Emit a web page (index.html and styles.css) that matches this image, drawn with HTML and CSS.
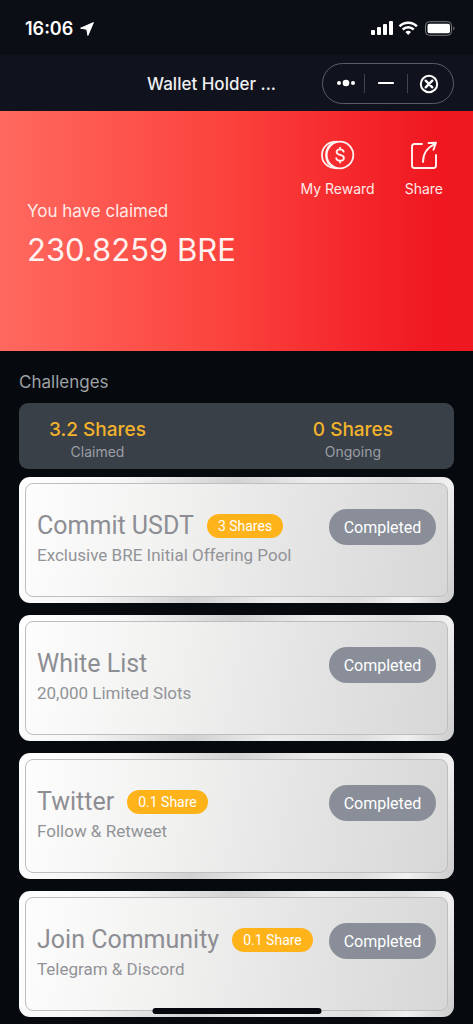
FILE: index.html
```html
<!DOCTYPE html>
<html lang="en">
<head>
<meta charset="utf-8">
<meta name="viewport" content="width=device-width, initial-scale=1">
<title>Wallet Holder</title>
<link rel="stylesheet" href="styles.css">
</head>
<body>
<div class="status">
  <span class="clock">16:06</span>
  <svg class="location" width="14" height="14" viewBox="0 0 14 14"><path d="M13.4.6.6 6.2 6.8 7.3 7.9 13.4Z" fill="#fff" stroke="#fff" stroke-linejoin="round"/></svg>
  <svg class="signals" width="86" height="16" viewBox="0 0 86 16" fill="#fff">
    <rect x="0" y="9" width="4" height="5" rx="1"/><rect x="6" y="6" width="4" height="8" rx="1"/><rect x="12" y="3" width="4" height="11" rx="1"/><rect x="18" y="0" width="4" height="14" rx="1"/>
    <g fill="none" stroke="#fff" stroke-width="2.5"><path d="M28.500 5.300a12.300 12.300 0 0 1 17.400 0M31.700 8.500a7.800 7.800 0 0 1 11 0"/></g>
    <path d="M34.400 11a4.100 4.100 0 0 1 5.600 0L37.200 14Z"/>
    <rect x="54.500" y=".7" width="26" height="13.600" rx="4" fill="none" stroke="#777a7f"/><rect x="56.500" y="2.700" width="22.500" height="9.600" rx="2"/><path d="M82.300 5.300q2.400 2.200 0 4.400Z" fill="#777a7f"/>
  </svg>
</div>
<header class="nav">
  <h1 class="nav-title">Wallet Holder ...</h1>
  <div class="capsule">
    <button class="capsule-button" aria-label="More"><svg width="20" height="8" viewBox="0 0 20 8" fill="#fff"><circle cx="3" cy="4" r="2"/><circle cx="10" cy="4" r="3.300"/><circle cx="17" cy="4" r="2"/></svg></button>
    <button class="capsule-button" aria-label="Minimize"><svg width="16" height="4" viewBox="0 0 16 4"><path d="M1 2h14" stroke="#fff" stroke-width="2.200" stroke-linecap="round"/></svg></button>
    <button class="capsule-button" aria-label="Close"><svg width="20" height="20" viewBox="0 0 20 20" fill="none" stroke="#fff" stroke-width="2"><circle cx="10" cy="10" r="8.200"/><path d="m6.700 6.700 6.600 6.600m0-6.600-6.600 6.600" stroke-width="2.400" stroke-linecap="round"/></svg></button>
  </div>
</header>
<section class="hero">
  <nav class="actions">
    <a class="action" href="#reward">
      <svg width="34" height="30" viewBox="0 0 34 30" fill="none" stroke="#fff3f1" stroke-width="1.800" stroke-linecap="round"><circle cx="19" cy="15" r="13.300"/><path d="M15.500 1.700C6.500 1.700 1 7.500 1 15s5.500 13.300 14.500 13.300M12 3.200C7.300 5.500 5 9.500 5 15s2.300 9.500 7 11.800"/><path d="M22.700 11.700c-.4-1.600-1.700-2.400-3.600-2.400-2 0-3.500 1-3.500 2.700 0 3.900 7.300 2 7.300 5.900 0 1.800-1.500 2.800-3.800 2.800-2.100 0-3.600-.8-3.900-2.600M19.100 7.600v1.700m0 11.400v1.800"/></svg>
      <span>My Reward</span>
    </a>
    <a class="action" href="#share">
      <svg width="26" height="30" viewBox="0 0 26 30" fill="none" stroke="#fff3f1" stroke-width="1.900" stroke-linecap="round" stroke-linejoin="round"><path d="M11 4H3.500Q1 4 1 6.500v19Q1 28 3.500 28h19q2.500 0 2.500-2.500V15M12 22C12 14 16.500 7.500 24 4M17.500 3l7.500-.3-2.500 7.100M24.800 3l-4.500 3.300"/></svg>
      <span>Share</span>
    </a>
  </nav>
  <p class="hero-label">You have claimed</p>
  <p class="hero-amount">230.8259 BRE</p>
</section>
<main class="challenges">
  <h2 class="heading">Challenges</h2>
  <div class="summary">
    <div class="stat"><strong class="stat-value">3.2 Shares</strong><span class="stat-label">Claimed</span></div>
    <div class="stat"><strong class="stat-value">0 Shares</strong><span class="stat-label">Ongoing</span></div>
  </div>
  <ul class="cards">
    <li class="card"><div class="card-inner"><div class="card-text"><div class="card-line"><h3 class="card-title">Commit USDT</h3><span class="badge">3 Shares</span></div><p class="card-note">Exclusive BRE Initial Offering Pool</p></div><button class="done">Completed</button></div></li>
    <li class="card"><div class="card-inner"><div class="card-text"><div class="card-line"><h3 class="card-title">White List</h3></div><p class="card-note">20,000 Limited Slots</p></div><button class="done">Completed</button></div></li>
    <li class="card"><div class="card-inner"><div class="card-text"><div class="card-line"><h3 class="card-title">Twitter</h3><span class="badge">0.1 Share</span></div><p class="card-note">Follow &amp; Retweet</p></div><button class="done">Completed</button></div></li>
    <li class="card"><div class="card-inner"><div class="card-text"><div class="card-line"><h3 class="card-title">Join Community</h3><span class="badge">0.1 Share</span></div><p class="card-note">Telegram &amp; Discord</p></div><button class="done">Completed</button></div></li>
  </ul>
</main>
<div class="home-indicator"></div>
</body>
</html>
```
FILE: styles.css
```css
* { box-sizing: border-box; }
body { margin: 0; background: #06090d; color: #fff; font-family: Inter, "Liberation Sans", sans-serif; }
h1, h2, h3, p, ul { margin: 0; padding: 0; font-weight: 400; }
svg { display: block; }
button { border: 0; padding: 0; background: none; color: inherit; font: inherit; }

.status { display: flex; align-items: center; gap: 7px; height: 55px; padding: 2px 16px 0 25px; background: #0b0e15; }
.clock { font-size: 18px; font-weight: 600; line-height: 24px; }
.signals { margin-left: auto; }

.nav { display: flex; justify-content: flex-end; align-items: center; gap: 46px; height: 56px; padding: 0 19px; background: #10121d; }
.nav-title { padding-top: 2px; font-size: 17px; font-weight: 500; line-height: 24px; white-space: nowrap; color: #eeeff1; }
.capsule { display: grid; grid-template-columns: 41fr 43fr 46fr; align-items: center; width: 132px; height: 41px; border: 1px solid #5b5d67; border-radius: 21px; }
.capsule-button { display: grid; place-items: center; height: 19px; }
.capsule-button:first-child { padding-left: 5px; }
.capsule-button:last-child { padding-right: 3px; }
.capsule-button + .capsule-button { border-left: 1px solid #41434f; }

.hero { height: 240px; padding: 29px 27px 0; background: linear-gradient(90deg, #ff695f 0%, #fb453f 45%, #f5272c 75%, #ef1820 92%, #ef1921 100%); color: #ffe9e6; }
.actions { display: flex; justify-content: flex-end; gap: 30px; padding-right: 3px; }
.action { display: flex; flex-direction: column; align-items: center; gap: 9px; color: inherit; font-size: 14px; line-height: 20px; text-decoration: none; }
.hero-label { font-size: 17px; line-height: 24px; }
.hero-amount { margin-top: 7px; font-size: 31px; line-height: 40px; color: #fff2f0; }

.challenges { padding: 18px 19px 7px; }
.heading { font-size: 17px; line-height: 26px; color: #9ea1a5; }
.summary { display: flex; justify-content: space-between; margin-top: 8px; padding: 14px 61px 7px 30px; border-radius: 9px; background: #394048; }
.stat { display: flex; flex-direction: column; align-items: center; }
.stat-value { font-size: 19px; font-weight: 500; line-height: 25px; color: #f3b22c; }
.stat-label { font-size: 14px; line-height: 20px; color: #9b9ea5; }

.cards { display: grid; grid-template-columns: minmax(0, 1fr); gap: 12px; margin-top: 8px; list-style: none; font-family: Roboto, "Liberation Sans", sans-serif; }
.card { padding: 6px; border-radius: 11px; background: linear-gradient(110deg, #fff 0%, #f6f6f6 22%, #d2d2d3 45%, #ececec 62%, #dedede 80%, #f0f0f1 90%, #cbcbcc 100%); }
.card-inner { display: flex; justify-content: space-between; align-items: flex-start; height: 114px; padding: 25px 11px 0; border: 1px solid #bebec0; border-radius: 8px; background: linear-gradient(100deg, #fdfdfd 0%, #f1f1f0 35%, #e4e4e4 65%, #d7d7d7 100%); }
.card-line { display: flex; align-items: center; gap: 13px; height: 34px; }
.card-title { font-size: 25px; line-height: 34px; color: #8d8e94; white-space: nowrap; }
.card-note { font-size: 17px; line-height: 24px; color: #929397; white-space: nowrap; }
.badge { padding: 0 11px; border-radius: 12px; background: #ffb31a; color: #fff; font-size: 14px; line-height: 24px; white-space: nowrap; }
.done { flex: none; height: 36px; width: 107px; border-radius: 18px; background: #898e99; color: #fff; font-size: 16px; }

.home-indicator { position: fixed; bottom: 10px; left: 50%; width: 169px; height: 6px; border-radius: 3px; background: #06080d; transform: translateX(-50%); }
```
